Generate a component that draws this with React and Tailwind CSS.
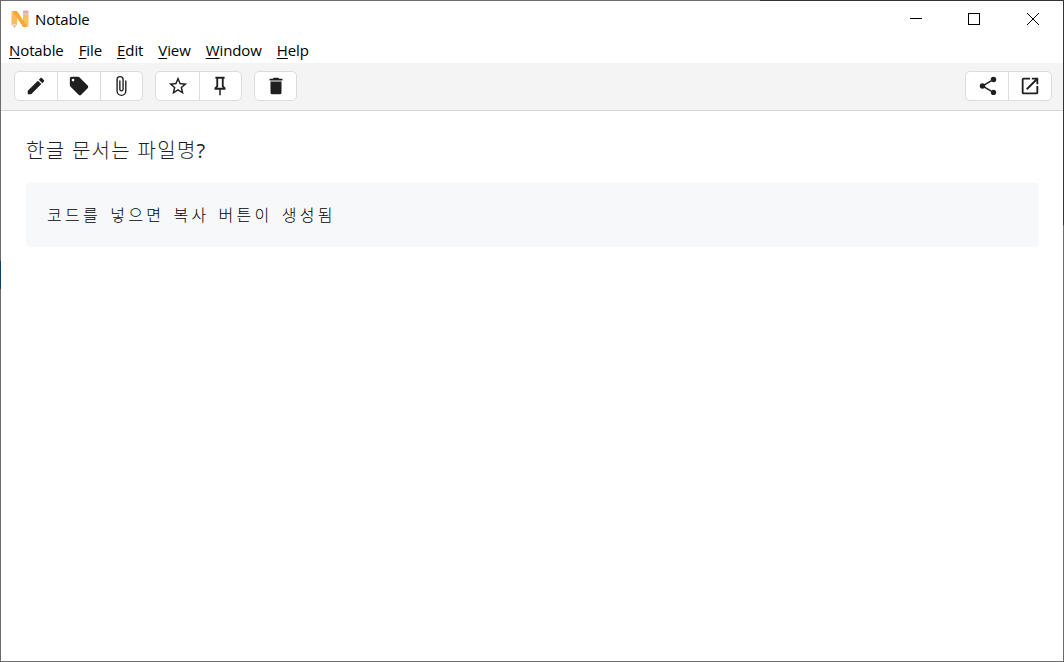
import clsx from 'clsx'

const icons = {
  pencil: 'M20.71,7.04C21.1,6.65 21.1,6 20.71,5.63L18.37,3.29C18,2.9 17.35,2.9 16.96,3.29L15.12,5.12L18.87,8.87M3,17.25V21H6.75L17.81,9.93L14.06,6.18L3,17.25Z',
  tag: 'M5.5,7A1.5,1.5 0 0,1 4,5.5A1.5,1.5 0 0,1 5.5,4A1.5,1.5 0 0,1 7,5.5A1.5,1.5 0 0,1 5.5,7M21.41,11.58L12.41,2.58C12.05,2.22 11.55,2 11,2H4C2.89,2 2,2.89 2,4V11C2,11.55 2.22,12.05 2.59,12.41L11.58,21.41C11.95,21.77 12.45,22 13,22C13.55,22 14.05,21.77 14.41,21.41L21.41,14.41C21.78,14.05 22,13.55 22,13C22,12.44 21.77,11.94 21.41,11.58Z',
  paperclip: 'M16.5,6V17.5A4,4 0 0,1 12.5,21.5A4,4 0 0,1 8.5,17.5V5A2.5,2.5 0 0,1 11,2.5A2.5,2.5 0 0,1 13.5,5V15.5A1,1 0 0,1 12.5,16.5A1,1 0 0,1 11.5,15.5V6H10V15.5A2.5,2.5 0 0,0 12.5,18A2.5,2.5 0 0,0 15,15.5V5A4,4 0 0,0 11,1A4,4 0 0,0 7,5V17.5A5.5,5.5 0 0,0 12.5,23A5.5,5.5 0 0,0 18,17.5V6H16.5Z',
  star: 'M12,15.39L8.24,17.66L9.23,13.38L5.91,10.5L10.29,10.13L12,6.09L13.71,10.13L18.09,10.5L14.77,13.38L15.76,17.66M22,9.24L14.81,8.63L12,2L9.19,8.63L2,9.24L7.45,13.97L5.82,21L12,17.27L18.18,21L16.54,13.97L22,9.24Z',
  pin: 'M16,12V4H17V2H7V4H8V12L6,14V16H11.2V22H12.8V16H18V14L16,12M8.8,14L10,12.8V4H14V12.8L15.2,14H8.8Z',
  trash: 'M19,4H15.5L14.5,3H9.5L8.5,4H5V6H19M6,19A2,2 0 0,0 8,21H16A2,2 0 0,0 18,19V7H6V19Z',
  share: 'M18,16.08C17.24,16.08 16.56,16.38 16.04,16.85L8.91,12.7C8.96,12.47 9,12.24 9,12C9,11.76 8.96,11.53 8.91,11.3L15.96,7.19C16.5,7.69 17.21,8 18,8A3,3 0 0,0 21,5A3,3 0 0,0 18,2A3,3 0 0,0 15,5C15,5.24 15.04,5.47 15.09,5.7L8.04,9.81C7.5,9.31 6.79,9 6,9A3,3 0 0,0 3,12A3,3 0 0,0 6,15C6.79,15 7.5,14.69 8.04,14.19L15.16,18.34C15.11,18.55 15.08,18.77 15.08,19C15.08,20.61 16.39,21.91 18,21.91C19.61,21.91 20.92,20.61 20.92,19A2.92,2.92 0 0,0 18,16.08Z',
  open: 'M14,3V5H17.59L7.76,14.83L9.17,16.24L19,6.41V10H21V3M19,19H5V5H12V3H5A2,2 0 0,0 3,5V19A2,2 0 0,0 5,21H19A2,2 0 0,0 21,19V12H19V19Z',
}

const menus = ['Notable', 'File', 'Edit', 'View', 'Window', 'Help']

const Logo = () => (
  <svg width="20" height="20" viewBox="0 0 20 20">
    <path d="M1.500 2.500h5.500v13l-2.500 3-3-3z" fill="#f9bc58" />
    <path d="M1.700 15h5.100l-2.500 3.500z" fill="#ead9c4" />
    <path d="M3.800 17.500h1.200l-.6 1z" fill="#555" />
    <path d="M13 5h5.500v12.500h-5.500z" fill="#fbc05a" />
    <path d="M2.500 2h4.500L17.500 18h-4.500z" fill="#f6a833" />
    <path d="M13 4h5.500v1.800h-5.500z" fill="#c9ced6" />
    <path d="M13 4V2.800a1.300 1.300 0 0 1 1.300-1.300h2.900A1.300 1.300 0 0 1 18.500 2.800v1.200z" fill="#f2a0a3" />
  </svg>
)

const ToolGroup = ({ names, className }) => (
  <div className={clsx('flex h-[30px] rounded-[5px] border border-[#dcdcdc] bg-white divide-x divide-[#dcdcdc]', className)}>
    {names.map((name) => (
      <button key={name} className="flex w-[43px] items-center justify-center text-[#1f1f1f] last:w-auto last:flex-1">
        <svg width="22" height="22" viewBox="0 0 24 24" fill="currentColor">
          <path d={icons[name]} />
        </svg>
      </button>
    ))}
  </div>
)

const TitleBar = () => (
  <div className="flex h-[37px] items-center justify-between pb-0.5 pl-[9px] pr-[22px] text-black">
    <div className="flex items-center gap-[5px]">
      <Logo />
      <span className="text-[15px] leading-5 tracking-[-0.1px]">Notable</span>
    </div>
    {/* Window controls */}
    <svg width="132" height="14" viewBox="0 0 132 14" fill="none" stroke="#000" shapeRendering="crispEdges">
      <path d="M1 6.500h12" />
      <path d="M59.500 1.500h11v11h-11z" />
      <path d="M118 1l12 12M130 1l-12 12" shapeRendering="auto" />
    </svg>
  </div>
)

const MenuBar = () => (
  <div className="flex h-[25px] items-center gap-[15px] pl-2 text-[15px] tracking-[-0.1px] text-black">
    {menus.map((menu) => (
      <span key={menu}>
        <span className="underline decoration-1 underline-offset-2">{menu[0]}</span>
        {menu.slice(1)}
      </span>
    ))}
  </div>
)

const App = () => {
  return (
    <div className="relative flex h-[662px] w-[1064px] flex-col border border-[#6b6b6b] bg-white font-['Open_Sans','Noto_Sans_CJK_KR',sans-serif]">
      <TitleBar />
      <MenuBar />

      {/* Toolbar */}
      <div className="flex h-12 items-center gap-3 border-b border-[#d6d6d6] bg-[#f4f4f4] pb-0.5 pl-[13px] pr-[11px]">
        <ToolGroup names={['pencil', 'tag', 'paperclip']} className="w-[129px] [&>:last-child]:pr-0.5" />
        <ToolGroup names={['star', 'pin']} className="w-[87px] [&>:first-child]:w-11 [&>:last-child]:pr-0.5" />
        <ToolGroup names={['trash']} className="w-[43px]" />
        <ToolGroup names={['share', 'open']} className="ml-auto w-[87px] [&>:first-child]:pl-0.5" />
      </div>

      {/* Note preview */}
      <div className="flex-1 pl-[25px] pr-6 pt-6 text-[#24292e]">
        <p className="h-8 text-[20px] font-light leading-8 tracking-[1.3px] text-[#1c2024]">
          한글 문서는 파일명<span className="font-normal">?</span>
        </p>
        <pre className="mt-4 h-16 rounded-[4px] bg-[#f6f8fa] px-[21px] pt-[19px] font-['Noto_Sans_CJK_KR',monospace] text-[16px] font-light leading-6 tracking-[3.3px] text-black [word-spacing:2.3px]">
          코드를 넣으면 복사 버튼이 생성됨
        </pre>
      </div>

      {/* Desktop showing through the window frame */}
      <div className="absolute -top-px -right-px h-px w-[304px] bg-[#333]" />
      <div className="absolute -top-px -right-px h-[225px] w-px bg-[#333]" />
      <div className="absolute top-[260px] -left-px h-7 w-px bg-[#123f66]" />
    </div>
  )
}

export default App
